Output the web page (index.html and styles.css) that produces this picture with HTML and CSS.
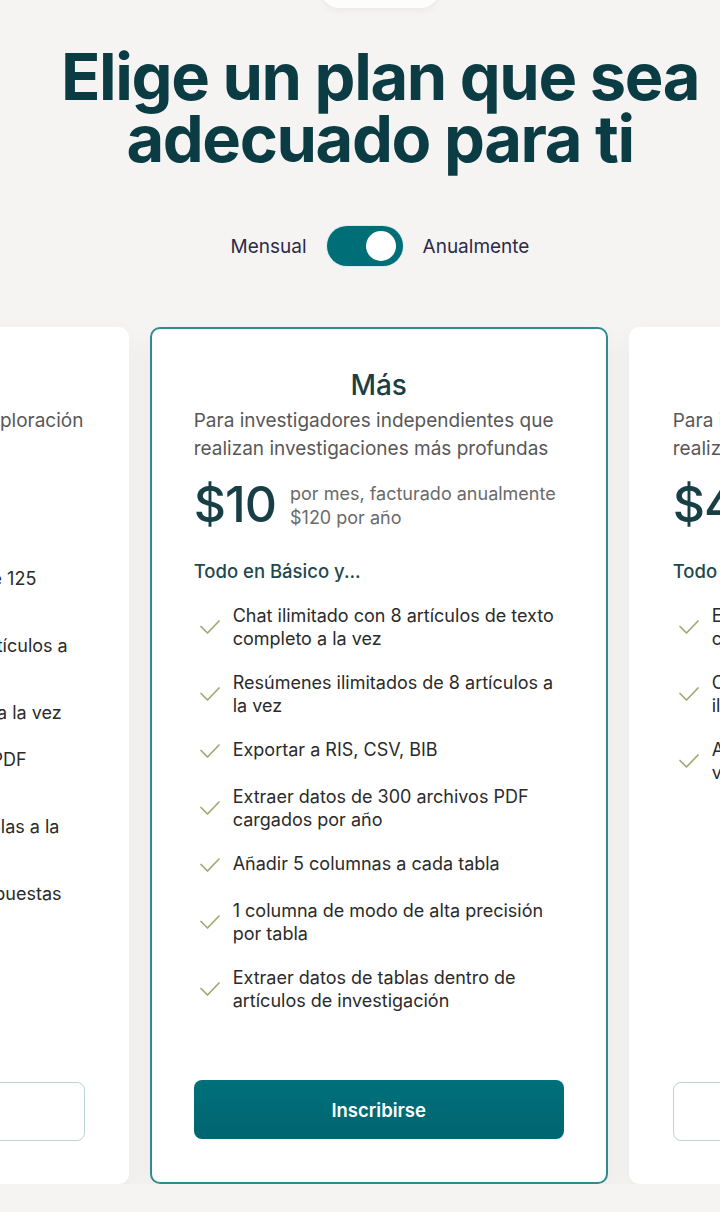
FILE: index.html
```html
<!DOCTYPE html>
<html lang="es">
<head>
<meta charset="utf-8">
<title>Planes</title>
<link rel="stylesheet" href="styles.css">
</head>
<body>
<div class="page">
  <div class="tab"></div>
  <h1 class="title">Elige un plan que sea<br>adecuado para ti</h1>

  <div class="billing">
    <span class="billing-label">Mensual</span>
    <span class="switch"><span class="knob"></span></span>
    <span class="billing-label">Anualmente</span>
  </div>

  <div class="plans">
    <section class="plan plan-basic">
      <h2 class="plan-name">Básico</h2>
      <p class="plan-desc">Para quienes comienzan una exploración</p>
      <div class="price">
        <span class="amount">$0</span>
        <span class="price-note">gratis para siempre</span>
      </div>
      <ul class="features features-basic">
        <li><svg class="check" viewBox="0 0 20 14"><polyline points="1,6.5 7.5,13 19,1"/></svg><span>Búsqueda potente en más de 125<br>millones de artículos</span></li>
        <li><svg class="check" viewBox="0 0 20 14"><polyline points="1,6.5 7.5,13 19,1"/></svg><span>Chat ilimitado con hasta 4 artículos a<br>la vez</span></li>
        <li><svg class="check" viewBox="0 0 20 14"><polyline points="1,6.5 7.5,13 19,1"/></svg><span>Resumen de tus 10 artículos a la vez</span></li>
        <li><svg class="check" viewBox="0 0 20 14"><polyline points="1,6.5 7.5,13 19,1"/></svg><span>Extraer datos de 5 archivos PDF<br>cargados por mes</span></li>
        <li><svg class="check" viewBox="0 0 20 14"><polyline points="1,6.5 7.5,13 19,1"/></svg><span>Extraer datos de hasta 10 tablas a la<br>vez</span></li>
        <li><svg class="check" viewBox="0 0 20 14"><polyline points="1,6.5 7.5,13 19,1"/></svg><span>Copiar, citar y descargar respuestas</span></li>
      </ul>
      <button class="btn btn-outline">Comenzar</button>
    </section>

    <section class="plan plan-featured">
      <h2 class="plan-name">Más</h2>
      <p class="plan-desc">Para investigadores independientes que realizan investigaciones más profundas</p>
      <div class="price">
        <span class="amount">$10</span>
        <span class="price-note">por mes, facturado anualmente<br>$120 por año</span>
      </div>
      <h3 class="features-title">Todo en Básico y...</h3>
      <ul class="features">
        <li><svg class="check" viewBox="0 0 20 14"><polyline points="1,6.5 7.5,13 19,1"/></svg><span>Chat ilimitado con 8 artículos de texto completo a la vez</span></li>
        <li><svg class="check" viewBox="0 0 20 14"><polyline points="1,6.5 7.5,13 19,1"/></svg><span>Resúmenes ilimitados de 8 artículos a la vez</span></li>
        <li><svg class="check" viewBox="0 0 20 14"><polyline points="1,6.5 7.5,13 19,1"/></svg><span>Exportar a RIS, CSV, BIB</span></li>
        <li><svg class="check" viewBox="0 0 20 14"><polyline points="1,6.5 7.5,13 19,1"/></svg><span>Extraer datos de 300 archivos PDF cargados por año</span></li>
        <li><svg class="check" viewBox="0 0 20 14"><polyline points="1,6.5 7.5,13 19,1"/></svg><span>Añadir 5 columnas a cada tabla</span></li>
        <li><svg class="check" viewBox="0 0 20 14"><polyline points="1,6.5 7.5,13 19,1"/></svg><span>1 columna de modo de alta precisión por tabla</span></li>
        <li><svg class="check" viewBox="0 0 20 14"><polyline points="1,6.5 7.5,13 19,1"/></svg><span>Extraer datos de tablas dentro de artículos de investigación</span></li>
      </ul>
      <button class="btn btn-primary">Inscribirse</button>
    </section>

    <section class="plan plan-pro">
      <h2 class="plan-name">Pro</h2>
      <p class="plan-desc">Para investigadores intensivos que realizan revisiones sistemáticas</p>
      <div class="price">
        <span class="amount">$42</span>
        <span class="price-note">por mes, facturado anualmente<br>$504 por año</span>
      </div>
      <h3 class="features-title">Todo en Más y...</h3>
      <ul class="features">
        <li><svg class="check" viewBox="0 0 20 14"><polyline points="1,6.5 7.5,13 19,1"/></svg><span>Extraer datos de 1.200 archivos PDF<br>cargados por año</span></li>
        <li><svg class="check" viewBox="0 0 20 14"><polyline points="1,6.5 7.5,13 19,1"/></svg><span>Columnas de modo de alta precisión<br>ilimitadas</span></li>
        <li><svg class="check" viewBox="0 0 20 14"><polyline points="1,6.5 7.5,13 19,1"/></svg><span>Acceso anticipado a nuevas<br>versiones</span></li>
      </ul>
      <button class="btn btn-outline">Inscribirse</button>
    </section>
  </div>
</div>
</body>
</html>
```

FILE: styles.css
```css
html, body {
  margin: 0;
  padding: 0;
}

body {
  background: #f5f4f2;
  font-family: Inter, "Noto Sans", "Liberation Sans", sans-serif;
  color: #2b2b2b;
  overflow: hidden;
}

.page {
  width: 760px;
  display: flex;
  flex-direction: column;
  align-items: center;
}

.tab {
  width: 118px;
  height: 40px;
  margin-top: -32px;
  background: #fdfdfc;
  border-radius: 0 0 18px 18px;
  box-shadow: 0 2px 8px rgba(0, 0, 0, 0.05);
}

.title {
  margin: 38px 0 0;
  font-size: 65px;
  line-height: 62px;
  font-weight: 700;
  letter-spacing: -1.4px;
  color: #0b3c44;
  text-align: center;
}

.billing {
  margin-top: 56px;
  display: flex;
  align-items: center;
  gap: 20px;
}

.billing-label {
  font-size: 19px;
  color: #2c2b48;
}

.switch {
  width: 76px;
  height: 40px;
  border-radius: 20px;
  background: #006e76;
  box-shadow: 0 0 0 1px #d6ecee;
  display: flex;
  align-items: center;
  justify-content: flex-end;
  padding-right: 7px;
  box-sizing: border-box;
}

.knob {
  width: 30px;
  height: 30px;
  border-radius: 50%;
  background: #fff;
}

.plans {
  margin-top: 61px;
  width: 100%;
  display: flex;
  justify-content: center;
  gap: 21px;
}

.plan {
  flex: 0 0 458px;
  box-sizing: border-box;
  height: 857px;
  background: #fff;
  border-radius: 10px;
  padding: 41px 44px 43px;
  display: flex;
  flex-direction: column;
  box-shadow: 0 10px 24px rgba(60, 40, 30, 0.05);
}

.plan-featured {
  border: 2px solid #2f8b90;
  padding: 39px 42px 43px;
}

.plan-name {
  margin: 0;
  font-size: 28px;
  line-height: 34px;
  font-weight: 500;
  color: #1d3f44;
  text-align: center;
}

.plan-desc {
  margin: 5px 0 0;
  font-size: 19px;
  line-height: 28px;
  color: #585858;
}

.price {
  margin-top: 13px;
  display: flex;
  align-items: flex-start;
  gap: 14px;
}

.amount {
  font-size: 50px;
  line-height: 56px;
  font-weight: 500;
  color: #173f45;
  letter-spacing: -1px;
}

.price-note {
  margin-top: 6px;
  font-size: 18px;
  line-height: 24px;
  color: #6a6a6a;
  white-space: nowrap;
}

.features-title {
  margin: 27px 0 0;
  font-size: 18.5px;
  line-height: 24px;
  font-weight: 500;
  color: #1f484e;
}

.features {
  list-style: none;
  margin: 21px 0 0;
  padding: 0;
  display: flex;
  flex-direction: column;
  gap: 21px;
}

.features-basic {
  margin-top: 63px;
}

.features li {
  display: flex;
  align-items: center;
  gap: 13px;
  min-height: 26px;
  font-size: 18px;
  line-height: 23px;
  color: #2b2b2b;
}

.features li span {
  align-self: flex-start;
}

.check {
  flex: 0 0 20px;
  width: 20px;
  height: 14px;
  margin-left: 6px;
  fill: none;
  stroke: #9cab72;
  stroke-width: 1.7;
  stroke-linecap: round;
  stroke-linejoin: round;
}

.btn {
  margin-top: auto;
  height: 59px;
  border-radius: 8px;
  font-family: inherit;
  font-size: 18.5px;
  font-weight: 600;
  cursor: pointer;
}

.btn-primary {
  border: none;
  background: linear-gradient(#00707a, #006570);
  color: #fff;
}

.btn-outline {
  border: 1px solid #bdd3d6;
  background: #fff;
  color: #006e76;
}
```
